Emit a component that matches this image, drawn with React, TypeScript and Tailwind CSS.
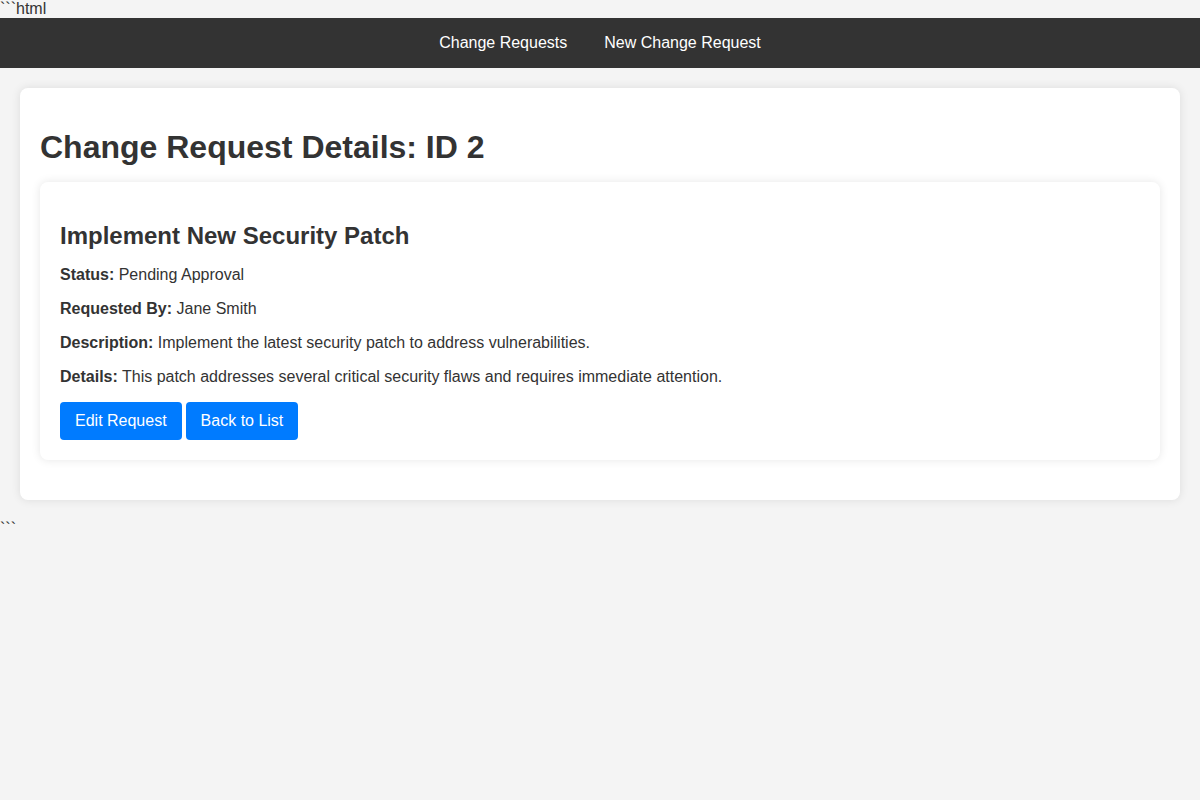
export default function App() {
    const fields = [
        { label: "Status:", value: "Pending Approval" },
        { label: "Requested By:", value: "Jane Smith" },
        { label: "Description:", value: "Implement the latest security patch to address vulnerabilities." },
        { label: "Details:", value: "This patch addresses several critical security flaws and requires immediate attention." },
    ]

    return (
        <div className="min-h-[800px] bg-[#f4f4f4] text-[#333] font-['Liberation_Sans',Arial,sans-serif] text-base leading-[18px]">
            <div>```html</div>
            <nav className="bg-[#333] h-[50px] flex items-center justify-center gap-[37px]">
                <a href="#" className="text-white">Change Requests</a>
                <a href="#" className="text-white">New Change Request</a>
            </nav>
            <div className="m-5 p-5 bg-white rounded-lg shadow-[0_0_10px_rgba(0,0,0,0.1)]">
                <h1 className="text-[32px] leading-[37px] font-bold mt-[21px] mb-[16px]">
                    Change Request Details: ID 2
                </h1>
                <div className="p-5 mb-5 bg-white rounded-lg shadow-[0_0_10px_rgba(0,0,0,0.1)]">
                    <h2 className="text-2xl leading-[28px] font-bold mt-5 mb-4">
                        Implement New Security Patch
                    </h2>
                    {fields.map((f) => (
                        <p key={f.label} className="my-4">
                            <strong>{f.label}</strong> {f.value}
                        </p>
                    ))}
                    <div className="flex gap-1">
                        <button className="bg-[#007bff] text-white px-[15px] py-[10px] rounded-[4px]">Edit Request</button>
                        <button className="bg-[#007bff] text-white px-[15px] py-[10px] rounded-[4px]">Back to List</button>
                    </div>
                </div>
            </div>
            <div>```</div>
        </div>
    )
}
